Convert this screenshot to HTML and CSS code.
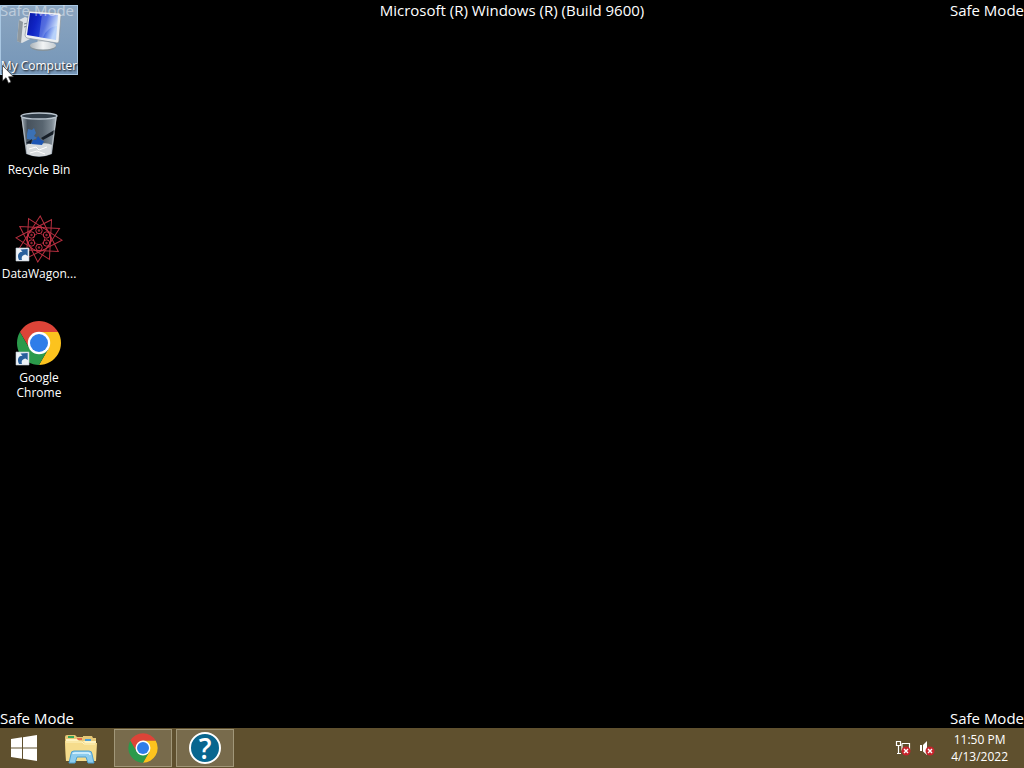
FILE: index.html
```html
<!DOCTYPE html>
<html lang="en">
<head>
<meta charset="utf-8">
<title>Desktop</title>
<link rel="stylesheet" href="styles.css">
</head>
<body>
<svg class="defs" aria-hidden="true">
  <defs>
    <g id="chrome">
      <path d="M24 13H43.05A22 22 0 0 0 4.95 13L14.5 29.5 24 24Z" fill="#dd4438"/>
      <path d="M24 13H43.05A22 22 0 0 0 4.95 13L14.5 29.5 24 24Z" fill="#fcc31e" transform="rotate(120 24 24)"/>
      <path d="M24 13H43.05A22 22 0 0 0 4.95 13L14.5 29.5 24 24Z" fill="#2b9a4b" transform="rotate(240 24 24)"/>
      <circle cx="24" cy="24" r="11.2" fill="#fff"/>
      <circle cx="24" cy="24" r="9" fill="#2f7de9"/>
    </g>
    <g id="shortcut">
      <path d="M1 33h13v13H1z" fill="#eef3f8" stroke="#bcc6d0" stroke-width=".6"/>
      <path d="M4 45C1.500 40 4 36.500 7.500 36.800L5.500 34.500 12.700 34 12.700 41 10.500 39.500C7.500 40 6 42 7 45Z" fill="#285f9c"/>
    </g>
  </defs>
</svg>
<main class="desktop">
  <nav class="icons">
    <a class="icon selected" href="#computer">
      <svg viewBox="0 0 48 48" aria-hidden="true">
        <defs>
          <linearGradient id="screen" x1="0" x2="1" y1="0" y2=".3"><stop stop-color="#0716a0"/><stop offset=".35" stop-color="#1024c4"/><stop offset=".65" stop-color="#2446d8"/><stop offset="1" stop-color="#b8d2fa"/></linearGradient>
          <linearGradient id="base" x1="0" x2="1"><stop stop-color="#aab2b8"/><stop offset=".5" stop-color="#f2f4f5"/><stop offset="1" stop-color="#c4cbd0"/></linearGradient>
        </defs>
        <path d="M4 13 10 10 15 12V32L7 36 2 34Z" fill="#dce1e4"/>
        <path d="M4 13 8 15 6 36 2 34Z" fill="#8f989e"/>
        <path d="M9 17l4-1M9 20l4-1" stroke="#788289" stroke-width="1"/>
        <path d="M23 30 33 31 34 39H22Z" fill="#c5ccd1"/>
        <ellipse cx="28" cy="39.500" rx="13" ry="4.500" fill="#87939b"/>
        <ellipse cx="28" cy="38.500" rx="13" ry="4" fill="url(#base)"/>
        <path d="M14 4 44 6Q46 6 46 8L44 34Q44 36 42 36L12 31Q10 30 10 28Z" fill="#edf0f2" stroke="#89949c" stroke-width=".7"/>
        <path d="M15 6 43 8 41 33 12 28Z" fill="url(#screen)"/>
        <path d="M27 7 43 8 42 19Q32 20 28 30.500L24 30Z" fill="#fff" opacity=".22"/>
      </svg>
      <span>My Computer</span>
    </a>
    <a class="icon" href="#recycle">
      <svg viewBox="0 0 48 48" aria-hidden="true">
        <defs><linearGradient id="glass" x1="0" x2="1"><stop stop-color="#aab4bd"/><stop offset=".18" stop-color="#46515c"/><stop offset=".6" stop-color="#586570"/><stop offset=".85" stop-color="#7c8892"/><stop offset="1" stop-color="#b3bcc4"/></linearGradient></defs>
        <path d="M6 4H42L37 43Q24 49 11 43Z" fill="url(#glass)"/>
        <path d="M11 34Q17 30 24 33 32 31 37 34L36 43Q24 48 12 43Z" fill="#d6dadd"/>
        <path d="M14 38l7-2 3 3 8-3M15 42l7-2 8 3" stroke="#fff" fill="none"/>
        <path d="M12 23 13 18 17 19 19 17 21 22 19 25 22 27 18 29 12 28Z" fill="#3b71b5"/>
        <path d="M16 33 18 29 21 29 23 25 26 29 29 30 27 34Z" fill="#1c55b4"/>
        <path d="M26 27 41 18 39 23 28 29Z" fill="#171f28"/>
        <path d="M11 32 17 28 16 33Z" fill="#121c2a"/>
        <ellipse cx="24" cy="5" rx="18" ry="3" fill="#303c47" stroke="#bac5cf" stroke-width="1.300"/>
        <path d="M7 7 12 43M41 7 36 43" stroke="#c4ccd2" stroke-width=".8"/>
      </svg>
      <span>Recycle Bin</span>
    </a>
    <a class="icon" href="#datawagon">
      <svg viewBox="0 0 48 48" aria-hidden="true">
        <g fill="none" stroke="#b52f3f" stroke-width="1" transform="rotate(3 24 24)">
          <path d="M24 1 43.900 35.500H4.100Z"/>
          <path d="M24 1 43.900 35.500H4.100Z" transform="rotate(30 24 24)"/>
          <path d="M24 1 43.900 35.500H4.100Z" transform="rotate(60 24 24)"/>
          <path d="M24 1 43.900 35.500H4.100Z" transform="rotate(90 24 24)"/>
        </g>
        <circle cx="24" cy="24" r="11" fill="#000"/>
        <g fill="none" stroke="#c53146" stroke-width="1">
          <circle cx="24" cy="24" r="12" stroke-dasharray="5 1.300"/>
          <circle cx="24" cy="24" r="5.500" stroke-dasharray="2 1"/>
          <circle cx="24" cy="15.500" r="3.200"/><circle cx="31.500" cy="20" r="3.200"/><circle cx="31.500" cy="28" r="3.200"/><circle cx="24" cy="32.500" r="3.200"/><circle cx="16.500" cy="28" r="3.200"/><circle cx="16.500" cy="20" r="3.200"/>
        </g>
        <g fill="#8f2734">
          <circle cx="24" cy="15.500" r="1.200"/><circle cx="31.500" cy="20" r="1.200"/><circle cx="31.500" cy="28" r="1.200"/><circle cx="24" cy="32.500" r="1.200"/><circle cx="16.500" cy="28" r="1.200"/><circle cx="16.500" cy="20" r="1.200"/>
        </g>
        <use href="#shortcut"/>
      </svg>
      <span>DataWagon...</span>
    </a>
    <a class="icon" href="#chrome-shortcut">
      <svg viewBox="0 0 48 48" aria-hidden="true"><use href="#chrome"/><use href="#shortcut"/></svg>
      <span>Google Chrome</span>
    </a>
  </nav>
  <div class="watermarks">
    <div class="marks"><span class="faded">Safe Mode</span><span>Microsoft (R) Windows (R) (Build 9600)</span><span>Safe Mode</span></div>
    <div class="marks"><span>Safe Mode</span><span>Safe Mode</span></div>
  </div>
  <svg class="cursor" viewBox="0 0 12 19" aria-hidden="true"><path d="M.5.5V16L4 12.700 6.500 18.200 9 17 6.600 11.800H11.500Z" fill="#fff" stroke="#222" stroke-width=".7"/></svg>
</main>
<footer class="taskbar">
  <button class="task start" aria-label="Start">
    <svg viewBox="0 0 26 26" aria-hidden="true"><path d="M0 4 11 2.300V12.500H0ZM12 2.200 26 0V12.500H12ZM0 13.500H11V23.700L0 22ZM12 13.500H26V26L12 23.800Z" fill="#fff"/></svg>
  </button>
  <button class="task" aria-label="File Explorer">
    <svg class="large" viewBox="0 0 32 32" aria-hidden="true">
      <path d="M0 5Q0 3 2 3H10L12 5H18V4H27L28 6H31V29H1Z" fill="#e5c777"/>
      <path d="M3 4h6v2H3z" fill="#36a65c"/><path d="M12 6h5v2h-5z" fill="#e66b4e"/><path d="M20 7h6v2h-6z" fill="#4a9cd5"/>
      <path d="M1 7H12L14 9H31V28H1Z" fill="#fff3c0"/>
      <path d="M0 9H18L20 11H32L31 29H1Z" fill="#f5dc8c"/>
      <path d="M1 10H17L19 12H30" stroke="#fff3bd" fill="none"/>
      <path d="M4 31 6 22Q6 19 9 19H24Q27 19 27 22L29 31H23L21 25H12L10 31Z" fill="#8dccee" stroke="#4fa0cf"/>
      <path d="M8 22Q8 21 10 21H23Q25 21 25 23" stroke="#dcf5ff" stroke-width="1.500" fill="none"/>
    </svg>
  </button>
  <button class="task open" aria-label="Google Chrome"><svg class="large" viewBox="0 0 48 48" aria-hidden="true"><use href="#chrome"/></svg></button>
  <button class="task open" aria-label="Help"><span class="help">?</span></button>
  <div class="tray">
    <button class="status" aria-label="Network disconnected">
      <svg viewBox="0 0 16 16" aria-hidden="true"><path d="M1.500 1.500h4v4h-4zM3.500 5.500v8M2 13.500h4M7 3.500h7.500V10M7 3.500V10h3" fill="none" stroke="#fff" stroke-width="1.200"/><circle cx="11" cy="11" r="4.500" fill="#c7232c"/><path d="M9 9l4 4M13 9l-4 4" stroke="#fff" stroke-width="1.400"/></svg>
    </button>
    <button class="status" aria-label="Sound muted">
      <svg viewBox="0 0 16 16" aria-hidden="true"><path d="M1 5H3V11H1ZM4 5 8 1V15L4 11.500Z" fill="#fff"/><circle cx="11" cy="11" r="4.500" fill="#c7232c"/><path d="M9 9l4 4M13 9l-4 4" stroke="#fff" stroke-width="1.400"/></svg>
    </button>
    <button class="clock"><time datetime="2022-04-13T23:50">11:50 PM<br>4/13/2022</time></button>
  </div>
</footer>
</body>
</html>
```

FILE: styles.css
```css
* { box-sizing: border-box; }
body {
  margin: 0;
  min-height: 100vh;
  display: flex;
  flex-direction: column;
  background: #000;
  color: #fff;
  font: 12px/15px "Open Sans", "Noto Sans", sans-serif;
}
.defs { position: absolute; width: 0; height: 0; }
button { padding: 0; border: 0; background: none; color: inherit; font: inherit; }
.desktop { position: relative; flex: 1; }
.icons { display: grid; grid-auto-rows: 104px; width: 78px; padding-top: 5px; }
.icon {
  display: flex;
  flex-direction: column;
  align-items: center;
  align-self: start;
  width: 78px;
  height: 70px;
  padding-top: 2px;
  gap: 3px;
  color: #fff;
  text-align: center;
  text-decoration: none;
  text-shadow: 1px 1px 2px #000;
}
.icon svg { width: 48px; height: 48px; flex: none; }
.icon span { width: min-content; white-space: normal; }
.selected { background: linear-gradient(#8ba5c0, #7596b8); border: 1px solid #a9c7e2; padding-top: 1px; }
.selected span { white-space: nowrap; }
.icon:nth-child(2) span { white-space: nowrap; }
.watermarks {
  position: absolute;
  inset: 0;
  display: flex;
  flex-direction: column;
  justify-content: space-between;
  font-size: 15px;
  line-height: 20px;
  pointer-events: none;
}
.marks { display: flex; justify-content: space-between; }
.faded { opacity: .45; }
.cursor { position: absolute; left: 2px; top: 65px; width: 12px; height: 19px; }
.taskbar {
  display: flex;
  align-items: stretch;
  height: 40px;
  padding: 1px 0;
  background: #5f502e;
}
.task { display: grid; place-items: center; width: 58px; margin-right: 4px; }
.start { width: 48px; }
.task svg { width: 26px; height: 26px; }
.task .large { width: 32px; height: 32px; }
.open { background: #786b4c; border: 1px solid #a19779; }
.help {
  width: 32px;
  height: 32px;
  border: 2px solid #fff;
  border-radius: 50%;
  background: #08668f;
  font: 600 28px/28px "Open Sans", sans-serif;
}
.tray { display: flex; align-items: center; margin-left: auto; gap: 8px; padding-right: 16px; }
.status svg { display: block; width: 16px; height: 16px; }
.clock { margin-left: 8px; line-height: 17px; text-align: center; }
```
